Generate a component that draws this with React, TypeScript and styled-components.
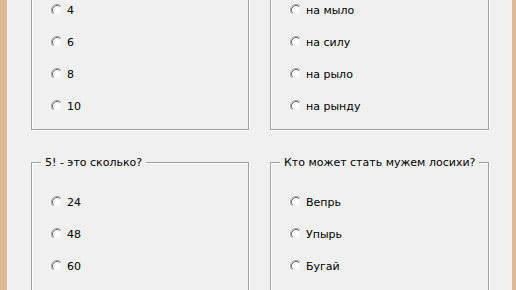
import React from "react";
import styled, { createGlobalStyle } from "styled-components";

type Question = {
  title: string;
  answers: string[];
};

// верхние заголовки в кадр не попадают
const questions: Question[] = [
  { title: "", answers: ["4", "6", "8", "10"] },
  { title: "", answers: ["на мыло", "на силу", "на рыло", "на рынду"] },
  { title: "5! - это сколько?", answers: ["24", "48", "60"] },
  { title: "Кто может стать мужем лосихи?", answers: ["Вепрь", "Упырь", "Бугай"] },
];

function RadioMark() {
  return (
    <RadioSvg width="12" height="12" viewBox="0 0 12 12">
      <circle cx="6" cy="6" r="5.5" fill="#ffffff" />
      <path d="M2.11 9.89 A5.5 5.5 0 0 1 9.89 2.11" fill="none" stroke="#a0a0a0" strokeWidth="1" />
      <path d="M2.82 9.18 A4.5 4.5 0 0 1 9.18 2.82" fill="none" stroke="#6e6e6e" strokeWidth="1" />
      <path d="M9.18 2.82 A4.5 4.5 0 0 1 2.82 9.18" fill="none" stroke="#e3e3e3" strokeWidth="1" />
    </RadioSvg>
  );
}

function App() {
  return (
    <>
      <GlobalStyle />
      <Window>
        <Frame $side="left" />
        <Client>
          <Grid>
            {questions.map((q, i) => (
              <Group key={i}>
                <Caption>{q.title}</Caption>
                <Options>
                  {q.answers.map((a) => (
                    <Option key={a}>
                      <RadioMark />
                      <span>{a}</span>
                    </Option>
                  ))}
                </Options>
              </Group>
            ))}
          </Grid>
        </Client>
        <Frame $side="right" />
      </Window>
    </>
  );
}

const GlobalStyle = createGlobalStyle`
  html, body {
    margin: 0;
    padding: 0;
    background: #f0f0f0;
  }
  body {
    font-family: "DejaVu Sans", sans-serif;
    font-size: 11px;
    color: #000000;
  }
`;

const Window = styled.div`
  display: flex;
  flex-direction: row;
  width: 516px;
  height: 290px;
  overflow: hidden;
`;

const Frame = styled.div<{ $side: "left" | "right" }>`
  flex: none;
  width: ${(props) => (props.$side === "left" ? "7px" : "4px")};
  background: #dfb997;
`;

const Client = styled.div`
  flex: 1;
  background: #f0f0f0;
  overflow: hidden;
`;

const Grid = styled.div`
  display: grid;
  grid-template-columns: 218px 219px;
  column-gap: 21px;
  row-gap: 26px;
  margin-top: -36px;
  padding-left: 24px;
`;

const Group = styled.fieldset`
  margin: 0;
  padding: 0;
  min-width: 0;
  border: 1px solid #a0a0a0;
  box-shadow: 1px 1px 0 #ffffff, inset 1px 1px 0 #ffffff;
`;

const Caption = styled.legend`
  margin-left: 9px;
  padding: 0 4px;
  height: 13px;
  line-height: 13px;
  background: #f0f0f0;
`;

const Options = styled.div`
  display: flex;
  flex-direction: column;
  height: 128px;
  padding: 17px 0 7px 19px;
`;

const Option = styled.label`
  display: flex;
  align-items: center;
  gap: 4px;
  height: 32px;
  white-space: nowrap;
`;

const RadioSvg = styled.svg`
  flex: none;
  display: block;
`;

export default App;
